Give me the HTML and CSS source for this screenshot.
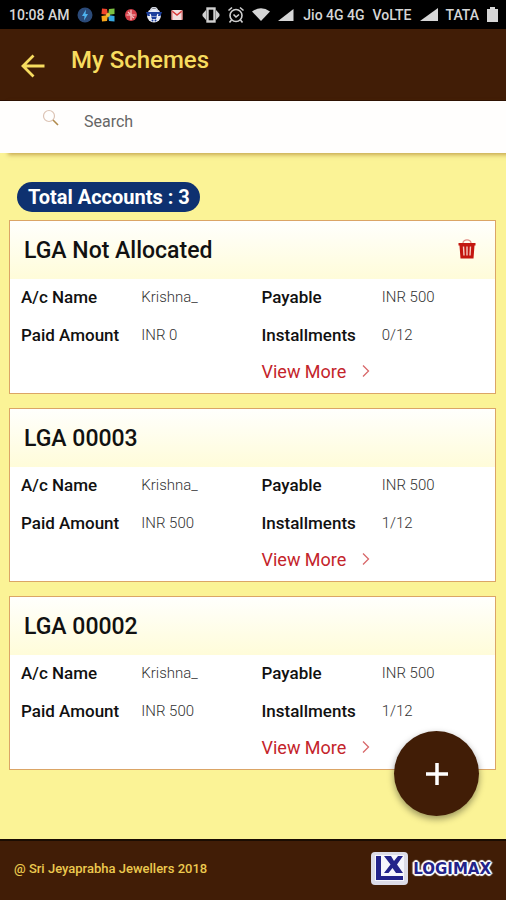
FILE: index.html
```html
<!DOCTYPE html>
<html lang="en">
<head>
    <meta charset="UTF-8">
    <meta name="viewport" content="width=device-width, initial-scale=1.0">
    <title>My Schemes</title>
    <link rel="stylesheet" href="styles.css">
</head>
<body>

<div class="status-bar">
    <div class="status-left">
        <span class="clock">10:08 AM</span>
        <svg width="16" height="16" viewBox="0 0 16 16">
            <circle cx="8" cy="8" r="7.5" fill="#2b4a78"/>
            <path d="M9 2.5L5 9h2.5L7 13.5 11 7H8.500z" fill="#4fb4f0"/>
        </svg>
        <svg width="16" height="16" viewBox="0 0 16 16">
            <path d="M8 8L7 2 2 1.500 1.500 7z" fill="#f0452c"/>
            <path d="M8 8l6.500-1L14.500 1.500 9 2z" fill="#7cc142"/>
            <path d="M8 8l-6.500 1L2 14.500l5-.5z" fill="#f8a51b"/>
            <path d="M8 8l1 6 5.500.5V9z" fill="#38a8e0"/>
            <circle cx="8" cy="8" r="2" fill="#e8c23c"/>
        </svg>
        <svg width="16" height="16" viewBox="0 0 16 16">
            <circle cx="8" cy="8" r="6" fill="#d4404a"/>
            <path d="M8 3v10M3.500 8h9M5 5l2 2M9 9.500l2 1.500" stroke="#f6c8c8" stroke-width="1.200"/>
        </svg>
        <svg width="16" height="16" viewBox="0 0 16 16">
            <circle cx="8" cy="8.500" r="7" fill="#e8ecf6"/>
            <path d="M4.500 4a3.500 3.500 0 0 1 7 0" fill="none" stroke="#cfd4de" stroke-width="1.500"/>
            <path d="M0 5h16l-1.500 4H1.500z" fill="#1c3f9c"/>
            <path d="M4 7l1.500 4h5l1.500-4" fill="none" stroke="#fff" stroke-width="1.200"/>
            <path d="M5 9.500h6l-1 2.500H6z" fill="#1c3f9c"/>
            <circle cx="6.500" cy="13.500" r="1" fill="#1c3f9c"/>
            <circle cx="9.500" cy="13.500" r="1" fill="#1c3f9c"/>
        </svg>
        <svg width="16" height="16" viewBox="0 0 16 16">
            <rect x="2.500" y="3" width="11" height="10" rx="1" fill="#f2dede"/>
            <path d="M3 4l5 4 5-4" fill="none" stroke="#d83a3a" stroke-width="1.600"/>
            <path d="M3 3.500v9.500M13 3.500v9.500" stroke="#e06a6a"/>
        </svg>
    </div>
    <div class="status-right">
        <div class="status-icons">
            <svg width="18" height="18" viewBox="0 0 18 18" fill="#d0d0d0">
                <rect x="5.500" y="2.500" width="7" height="13" fill="none" stroke="#d0d0d0" stroke-width="2.400"/>
                <path d="M4 4v10L.5 10V8zM14 4v10l3.500-4V8z"/>
            </svg>
            <svg width="18" height="18" viewBox="0 0 18 18" fill="none" stroke="#d0d0d0" stroke-width="1.600">
                <circle cx="9" cy="9.500" r="6"/>
                <path d="M1.500 4.500L5 1.500M16.500 4.500L13 1.500M4.500 14L2.500 16.500M13.500 14l2 2.500M6.500 8.500L9 11l3-2.500"/>
            </svg>
            <svg width="18" height="18" viewBox="0 0 18 18">
                <path d="M0 5.500Q9-1 18 5.500L9 15z" fill="#d6d6d6"/>
            </svg>
            <svg width="18" height="18" viewBox="0 0 18 18">
                <path d="M1 15L16.500 3v12z" fill="#d6d6d6"/>
            </svg>
        </div>
        <span>Jio 4G 4G</span>
        <span>VoLTE</span>
        <svg width="18" height="18" viewBox="0 0 18 18">
            <path d="M0 15L18 2v13z" fill="#d6d6d6"/>
        </svg>
        <span>TATA</span>
        <svg width="11" height="18" viewBox="0 0 11 18">
            <path d="M0 3h3V1h5v2h3v13H0z" fill="#d6d6d6"/>
        </svg>
    </div>
</div>

<header class="header">
    <button type="button" class="back-btn" aria-label="Back">
        <svg width="24" height="24" viewBox="0 0 24 24" fill="none" stroke="#f7dc5f" stroke-width="2.800">
            <path d="M23.500 12H2M12.500 1.500L2 12l10.500 10.500"/>
        </svg>
    </button>
    <h1>My Schemes</h1>
</header>

<form class="search">
    <label for="search" aria-label="Search">
        <svg width="18" height="18" viewBox="0 0 18 18" fill="none">
            <circle cx="7" cy="7" r="5.500" stroke="#dcc3b4" stroke-width="1.200"/>
            <path d="M11 11l5 5" stroke="#b08a4c" stroke-width="1.600"/>
        </svg>
    </label>
    <input type="text" id="search" placeholder="Search">
</form>

<main class="content">
    <h2 class="total">Total Accounts : 3</h2>

    <section class="card">
        <div class="card-header">
            <h3>LGA Not Allocated</h3>
            <button type="button" class="delete-btn" aria-label="Delete">
                <svg width="18" height="20" viewBox="0 0 18 20">
                    <path d="M5 4a4 3.200 0 0 1 8 0" fill="none" stroke="#e08a84" stroke-width="1.300"/>
                    <path d="M.5 4h17v2.500h-1L15.500 19.500h-13L1.500 6.500h-1z" fill="#c3160f"/>
                    <path d="M5.500 7.500l.5 9M9 7.500v9M12.500 7.500l-.5 9" stroke="#f6c9c0" stroke-width="1.400"/>
                </svg>
            </button>
        </div>
        <dl class="details">
            <dt>A/c Name</dt><dd>Krishna_</dd>
            <dt>Payable</dt><dd>INR 500</dd>
            <dt>Paid Amount</dt><dd>INR 0</dd>
            <dt>Installments</dt><dd>0/12</dd>
        </dl>
        <a href="#" class="view-more">View More
            <svg width="8" height="14" viewBox="0 0 8 14"><path d="M1 1.500L6.500 7 1 12.500" fill="none" stroke="#d8686a" stroke-width="1.300"/></svg>
        </a>
    </section>

    <section class="card">
        <div class="card-header">
            <h3>LGA 00003</h3>
        </div>
        <dl class="details">
            <dt>A/c Name</dt><dd>Krishna_</dd>
            <dt>Payable</dt><dd>INR 500</dd>
            <dt>Paid Amount</dt><dd>INR 500</dd>
            <dt>Installments</dt><dd>1/12</dd>
        </dl>
        <a href="#" class="view-more">View More
            <svg width="8" height="14" viewBox="0 0 8 14"><path d="M1 1.500L6.500 7 1 12.500" fill="none" stroke="#d8686a" stroke-width="1.300"/></svg>
        </a>
    </section>

    <section class="card">
        <div class="card-header">
            <h3>LGA 00002</h3>
        </div>
        <dl class="details">
            <dt>A/c Name</dt><dd>Krishna_</dd>
            <dt>Payable</dt><dd>INR 500</dd>
            <dt>Paid Amount</dt><dd>INR 500</dd>
            <dt>Installments</dt><dd>1/12</dd>
        </dl>
        <a href="#" class="view-more">View More
            <svg width="8" height="14" viewBox="0 0 8 14"><path d="M1 1.500L6.500 7 1 12.500" fill="none" stroke="#d8686a" stroke-width="1.300"/></svg>
        </a>
    </section>
</main>

<button type="button" class="add-btn" aria-label="Add scheme">
    <svg width="22" height="22" viewBox="0 0 22 22"><path d="M11 0v22M0 11h22" stroke="#fff" stroke-width="3.500"/></svg>
</button>

<footer class="footer">
    <p>@ Sri Jeyaprabha Jewellers 2018</p>
    <div class="logo">
        <svg width="37" height="33" viewBox="0 0 37 33">
            <rect x="0" y="0" width="37" height="33" rx="4" fill="#dcdce8"/>
            <rect x="4" y="3" width="29" height="26" fill="#f6f6fc"/>
            <path d="M5 4h5v20h22v4H5z" fill="#23238a"/>
            <path d="M13 4h7l3 5 4-5h5l-6 8.500 6 8.500h-7l-3.500-5-4 5H13l6.500-8.500z" fill="#23238a"/>
        </svg>
        <span>LOGIMAX</span>
    </div>
</footer>

</body>
</html>
```
FILE: styles.css
```css
* {
    margin: 0;
    padding: 0;
    box-sizing: border-box;
    font-family: Roboto, sans-serif;
}

body {
    display: flex;
    flex-direction: column;
    min-height: 100vh;
    background-color: #fbf396;
    color: #111;
}

button {
    background: none;
    border: none;
    cursor: pointer;
}

svg {
    display: block;
    flex-shrink: 0;
}

.status-bar {
    display: flex;
    justify-content: space-between;
    align-items: center;
    height: 29px;
    padding: 1px 8px 0 9px;
    background-color: #000;
    color: #d6d6d6;
    font-size: 14px;
    font-weight: 500;
    white-space: nowrap;
}

.status-left,
.status-icons {
    display: flex;
    align-items: center;
    gap: 7px;
}

.status-right {
    display: flex;
    align-items: center;
    gap: 8px;
}

.header {
    display: flex;
    align-items: center;
    gap: 26px;
    height: 72px;
    padding: 2px 21px 0;
    background-color: #411d06;
    border-bottom: 1px solid #2a0f03;
}

.header h1 {
    padding-bottom: 12px;
    color: #f7dc5f;
    font-size: 24px;
    font-weight: 500;
}

.search {
    display: flex;
    gap: 24px;
    height: 52px;
    padding: 8px 42px 0;
    background-color: #fffefd;
    box-shadow: 8px 2px 4px rgba(150, 100, 20, 0.5);
}

.search input {
    flex: 1;
    height: 24px;
    min-width: 0;
    border: none;
    outline: none;
    background: none;
    color: #555;
    font-size: 16px;
}

.search input::placeholder {
    color: #666;
}

.content {
    display: flex;
    flex-direction: column;
    flex: 1;
    gap: 14px;
    padding: 29px 10px 40px 9px;
}

.total {
    align-self: flex-start;
    margin: 0 0 -6px 8px;
    padding: 0 10px 0 11px;
    border-radius: 15px;
    background-color: #0e3170;
    color: #fff;
    font-size: 20px;
    font-weight: 700;
    line-height: 30px;
}

.card {
    background-color: #fff;
    border: 1px solid #dba566;
}

.card-header {
    display: flex;
    justify-content: space-between;
    align-items: center;
    height: 58px;
    padding: 0 19px 0 14px;
    background: linear-gradient(#fffffd, #fffcd9);
}

.card-header h3 {
    font-size: 23px;
    font-weight: 500;
}

.delete-btn {
    padding-bottom: 3px;
}

.details {
    display: grid;
    grid-template-columns: repeat(4, 1fr);
    margin-right: 4px;
    line-height: 36px;
    row-gap: 2px;
}

.details dt,
.details dd {
    padding-left: 11px;
    white-space: nowrap;
}

.details dt {
    font-size: 17px;
    font-weight: 500;
}

.details dd {
    color: #333;
    font-size: 15px;
    font-weight: 300;
}

.view-more {
    display: flex;
    align-items: center;
    gap: 16px;
    height: 40px;
    margin-left: 50%;
    padding: 0 0 4px 9px;
    color: #c4242b;
    font-size: 18px;
    text-decoration: none;
}

.add-btn {
    position: fixed;
    right: 27px;
    bottom: 84px;
    display: flex;
    justify-content: center;
    align-items: center;
    width: 85px;
    height: 85px;
    border-radius: 50%;
    background-color: #411d06;
    box-shadow: 0 3px 7px rgba(0, 0, 0, 0.4);
}

.footer {
    display: flex;
    justify-content: space-between;
    align-items: center;
    height: 61px;
    padding: 0 15px 4px 14px;
    background-color: #411d06;
    border-top: 2px solid #1a0c02;
}

.footer p {
    color: #ecc94f;
    font-size: 13px;
    font-weight: 500;
}

.logo {
    display: flex;
    align-items: center;
    gap: 5px;
}

.logo span {
    color: #23238a;
    font-family: "DejaVu Sans", sans-serif;
    font-size: 15px;
    font-weight: 700;
    text-shadow: 1px 1px 1px #fff, -1px 1px 1px #fff, 1px -1px 1px #fff, -1px -1px 1px #fff, 0 2px 1px #fff, 0 -2px 1px #fff, 2px 0 1px #fff, -2px 0 1px #fff;
}
```
